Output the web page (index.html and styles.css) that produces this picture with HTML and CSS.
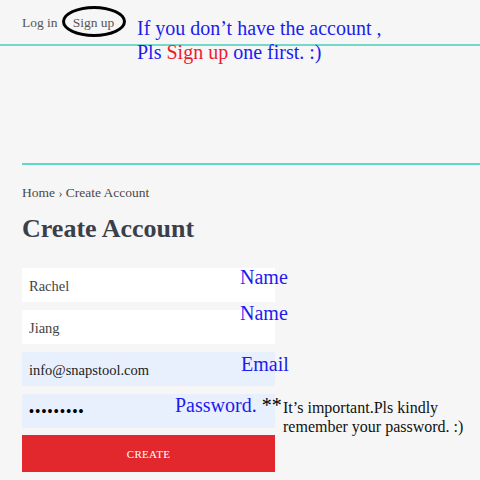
FILE: index.html
```html
<!DOCTYPE html>
<html lang="en">
<head>
<meta charset="utf-8">
<title>Create Account</title>
<link rel="stylesheet" href="styles.css">
</head>
<body>
<header class="topbar">
  <nav class="account-links">
    <a class="account-link" href="#">Log in</a>
    <a class="account-link" href="#">Sign up</a>
  </nav>
  <span class="ring"></span>
  <p class="note note-top">If you don’t have the account ,<br>Pls <span class="note-red">Sign up</span> one first. :)</p>
</header>
<div class="spacer"></div>
<main class="content">
  <div class="breadcrumb">Home <span class="crumb-sep">›</span> Create Account</div>
  <h1 class="title">Create Account</h1>
  <form class="form">
    <div class="field">
      <input class="input" type="text" value="Rachel">
      <span class="note note-field note-name1">Name</span>
    </div>
    <div class="field">
      <input class="input" type="text" value="Jiang">
      <span class="note note-field note-name2">Name</span>
    </div>
    <div class="field">
      <input class="input input-filled input-email" type="text" value="info@snapstool.com">
      <span class="note note-field note-email">Email</span>
    </div>
    <div class="field">
      <input class="input input-filled input-pass" type="password" value="123456789">
      <span class="note note-field note-pass">Password. <span class="note-black">**</span></span>
      <span class="note-side">It’s important.Pls kindly<br>remember your password. :)</span>
    </div>
    <button class="btn" type="button">CREATE</button>
  </form>
</main>
</body>
</html>
```
FILE: styles.css
```css
html, body {
  margin: 0;
  padding: 0;
}
body {
  background: #f6f6f6;
  font-family: "Liberation Serif", "DejaVu Serif", serif;
  color: #444;
  width: 480px;
  height: 480px;
  overflow: hidden;
}
.topbar {
  position: relative;
  height: 46px;
  box-sizing: border-box;
  padding: 13px 0 0 22px;
  border-bottom: 2px solid #74d9cc;
}
.account-links {
  display: flex;
  gap: 15px;
  font-size: 13.5px;
  line-height: 20px;
}
.account-link {
  color: #555;
  text-decoration: none;
}
.ring {
  position: absolute;
  left: 62px;
  top: 6px;
  width: 64px;
  height: 31px;
  box-sizing: border-box;
  border: 3.5px solid #000;
  border-radius: 50%;
}
.note {
  font-family: "Liberation Serif", serif;
  color: #1c1cf0;
  margin: 0;
}
.note-top {
  position: absolute;
  left: 137px;
  top: 17px;
  font-size: 20px;
  line-height: 23.5px;
  white-space: nowrap;
  z-index: 2;
}
.note-red {
  color: #f01a2e;
}
.spacer {
  height: 117px;
}
.content {
  margin-left: 22px;
  border-top: 2px solid #5fd8c5;
  padding-top: 18px;
}
.breadcrumb {
  font-size: 13.5px;
  line-height: 20px;
  color: #4a4a4a;
}
.crumb-sep {
  font-size: 12px;
}
.title {
  margin: 10px 0 0;
  font-size: 26px;
  line-height: 32px;
  font-weight: bold;
  color: #3b3f4a;
}
.form {
  margin-top: 23px;
  width: 253px;
  display: flex;
  flex-direction: column;
  gap: 8px;
}
.field {
  position: relative;
  height: 34px;
}
.input {
  display: block;
  width: 100%;
  height: 34px;
  box-sizing: border-box;
  border: none;
  outline: none;
  margin: 0;
  padding: 2px 7px 0;
  background: #fff;
  font-family: "Liberation Serif", serif;
  font-size: 14.5px;
  color: #444;
}
.input-filled {
  background: #e8f0fe;
}
.input-email {
  color: #222;
}
.input-pass {
  color: #000;
  font-size: 14px;
  letter-spacing: 1.3px;
  font-weight: bold;
}
.note-field {
  position: absolute;
  font-size: 20px;
  line-height: 20px;
  white-space: nowrap;
}
.note-name1 {
  left: 218px;
  top: -1px;
}
.note-name2 {
  left: 218px;
  top: -7px;
}
.note-email {
  left: 219px;
  top: 2px;
}
.note-pass {
  left: 153px;
  top: 1px;
}
.note-black {
  color: #000;
}
.note-side {
  position: absolute;
  left: 261px;
  top: 4px;
  font-family: "Liberation Serif", serif;
  font-size: 16px;
  line-height: 19px;
  color: #111;
  white-space: nowrap;
}
.btn {
  margin-top: -1px;
  height: 37px;
  border: none;
  background: #e3282d;
  color: #fff;
  font-family: "Liberation Serif", serif;
  font-size: 11px;
  letter-spacing: 0.3px;
  padding: 1px 0 0;
  cursor: pointer;
}
```
